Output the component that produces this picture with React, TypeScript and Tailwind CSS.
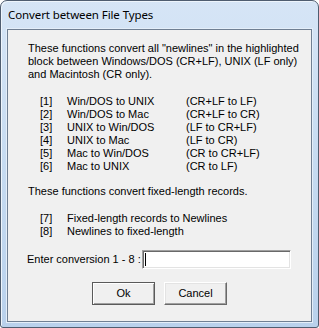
import React from 'react'

const eolRows = [
  ['[1]', 'Win/DOS to UNIX', '(CR+LF to LF)'],
  ['[2]', 'Win/DOS to Mac', '(CR+LF to CR)'],
  ['[3]', 'UNIX to Win/DOS', '(LF to CR+LF)'],
  ['[4]', 'UNIX to Mac', '(LF to CR)'],
  ['[5]', 'Mac to Win/DOS', '(CR to CR+LF)'],
  ['[6]', 'Mac to UNIX', '(CR to LF)'],
]

const recordRows = [
  ['[7]', 'Fixed-length records to Newlines'],
  ['[8]', 'Newlines to fixed-length'],
]

export default function App() {
  return (
    <div className="w-[319px] h-[328px] bg-white">
      <div className="w-full h-full flex flex-col rounded-t-[7px] rounded-b-[3px] border border-[#4f5d70] bg-gradient-to-b from-[#d6e5f6] via-[#c6dbf1] to-[#b9d1ec] px-[6px] pb-[5px] shadow-[inset_1px_1px_0_#eef5fc]">
        {/* Title bar */}
        <div className="h-[28px] flex items-center pl-[1px] pb-[1px] text-[11.5px] tracking-[-0.1px] text-black font-['Noto_Sans','Open_Sans',sans-serif]">
          Convert between File Types
        </div>

        {/* Client area */}
        <div className="flex-1 border border-[#6f7f93] bg-[#f0f0f0] shadow-[0_0_0_1px_#e4eef9] font-['Liberation_Sans',Arial,sans-serif] text-[11px] leading-[13px] text-black">
          <div className="pl-[20px] pt-[12px]">
            <p>
              These functions convert all "newlines" in the highlighted
              <br />
              block between Windows/DOS (CR+LF), UNIX (LF only)
              <br />
              and Macintosh (CR only).
            </p>
          </div>

          <div className="pl-[32px] pt-[14px] grid grid-cols-[27px_119px_auto]">
            {eolRows.map(([n, what, how]) => (
              <React.Fragment key={n}>
                <span>{n}</span>
                <span>{what}</span>
                <span>{how}</span>
              </React.Fragment>
            ))}
          </div>

          <p className="pl-[20px] pt-[12px]">These functions convert fixed-length records.</p>

          <div className="pl-[32px] pt-[14px] grid grid-cols-[27px_auto]">
            {recordRows.map(([n, what]) => (
              <React.Fragment key={n}>
                <span>{n}</span>
                <span>{what}</span>
              </React.Fragment>
            ))}
          </div>

          <div className="flex items-center pl-[19px] pt-[12px]">
            <span className="w-[115px]">Enter conversion 1 - 8 :</span>
            <div className="w-[149px] h-[19px] bg-white border border-t-[#a0a0a0] border-l-[#a0a0a0] border-b-white border-r-white shadow-[inset_1px_1px_0_#696969,inset_-1px_-1px_0_#e3e3e3] flex items-center pl-[2px]">
              <div className="w-px h-[13px] bg-black" />
            </div>
          </div>

          <div className="flex justify-center gap-[9px] pt-[13px]">
            <button className="w-[63px] h-[23px] bg-[#f0f0f0] border border-[#5a5a5a] shadow-[inset_1px_1px_0_#ffffff,inset_-1px_-1px_0_#a0a0a0] text-[11px]">
              Ok
            </button>
            <button className="w-[63px] h-[23px] bg-[#f0f0f0] border border-t-white border-l-white border-b-[#696969] border-r-[#696969] shadow-[inset_-1px_-1px_0_#a0a0a0,inset_1px_1px_0_#e3e3e3] text-[11px]">
              Cancel
            </button>
          </div>
        </div>
      </div>
    </div>
  )
}
